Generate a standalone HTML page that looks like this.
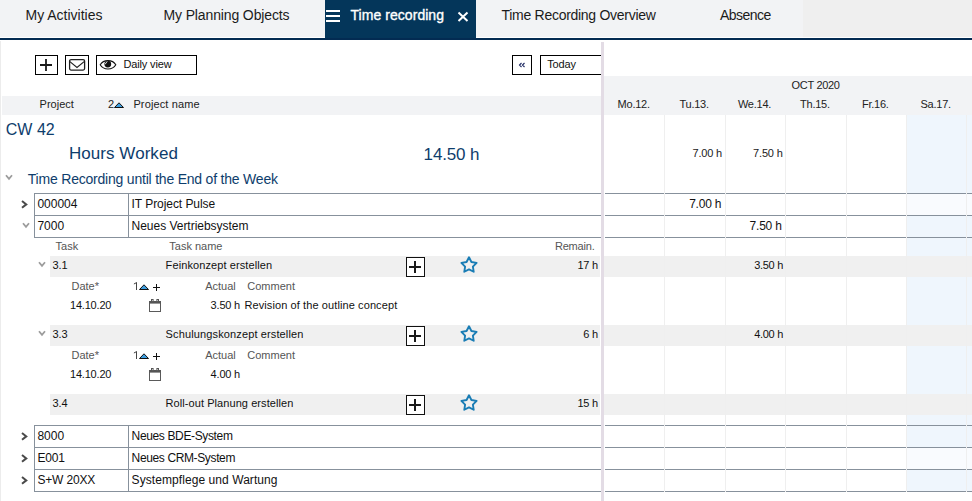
<!DOCTYPE html>
<html><head><meta charset="utf-8"><style>
html,body{margin:0;padding:0;width:972px;height:501px;overflow:hidden;background:#fff;position:relative}
body>div,body>svg{position:absolute}
.t{font-family:"Liberation Sans",sans-serif;line-height:1;white-space:nowrap}
</style></head><body>
<div style="left:0px;top:0px;width:803px;height:37px;background:#f2f3f5"></div>
<div style="left:803px;top:0px;width:169px;height:37px;background:#efefef"></div>
<div style="left:0px;top:37px;width:972px;height:1px;background:#fff"></div>
<div style="left:325px;top:0px;width:151px;height:38px;background:#04365a"></div>
<div style="left:0px;top:38px;width:972px;height:2px;background:#032b52"></div>
<div class="t" style="left:25.5px;top:8px;font-size:14px;color:#1b1b1b;">My Activities</div>
<div class="t" style="left:163.5px;top:8px;font-size:14px;color:#1b1b1b;letter-spacing:-0.13px">My Planning Objects</div>
<div class="t" style="left:350.5px;top:8px;font-size:14px;color:#fff;letter-spacing:0.05px;-webkit-text-stroke:0.35px #fff">Time recording</div>
<div class="t" style="left:501.5px;top:8px;font-size:14px;color:#1b1b1b;letter-spacing:-0.28px">Time Recording Overview</div>
<div class="t" style="left:720px;top:8px;font-size:14px;color:#1b1b1b;letter-spacing:-0.55px">Absence</div>
<div style="left:326px;top:10px;width:14px;height:2px;background:#fff"></div>
<div style="left:326px;top:15px;width:14px;height:2px;background:#fff"></div>
<div style="left:326px;top:20px;width:14px;height:2px;background:#fff"></div>
<svg style="position:absolute;left:457px;top:11px" width="12" height="12" viewBox="0 0 12 12"><path d="M1.5 1.6L10.5 9.9M10.5 1.6L1.5 9.9" stroke="#fff" stroke-width="2"/></svg>
<div style="left:0px;top:41px;width:1px;height:460px;background:#ececec"></div>
<div style="left:35px;top:55px;width:23px;height:20px;border:1px solid #000;box-sizing:border-box;background:#fff"></div>
<svg style="position:absolute;left:35px;top:55px" width="23" height="20" viewBox="0 0 23 20"><path d="M5 10H17M11 4V16" stroke="#1a1a1a" stroke-width="1.8"/></svg>
<div style="left:65px;top:55px;width:24px;height:20px;border:1px solid #000;box-sizing:border-box;background:#fff"></div>
<svg style="position:absolute;left:65px;top:55px" width="24" height="20" viewBox="0 0 24 20"><rect x="4.6" y="4.6" width="15" height="10.5" rx="1.5" fill="none" stroke="#222" stroke-width="1.3"/><path d="M4.9 6.6L12 12.4L19.1 6.6" fill="none" stroke="#222" stroke-width="1.2"/></svg>
<div style="left:96px;top:55px;width:101px;height:20px;border:1px solid #000;box-sizing:border-box;background:#fff"></div>
<svg style="position:absolute;left:99px;top:58px" width="18" height="13" viewBox="0 0 18 13"><path d="M1.2 6.8C4.5 1.2 13.5 1.2 16.8 6.8C13.5 12.4 4.5 12.4 1.2 6.8Z" fill="none" stroke="#111" stroke-width="1.1"/><circle cx="8.8" cy="6.1" r="3.4" fill="#111"/><path d="M6.4 6.2Q6.6 4.4 8.4 3.6" fill="none" stroke="#fff" stroke-width="0.9"/></svg>
<div class="t" style="left:123.5px;top:59px;font-size:11px;color:#111;letter-spacing:-0.15px">Daily view</div>
<div style="left:512px;top:55px;width:20px;height:20px;border:1px solid #000;box-sizing:border-box;background:#fff"></div>
<svg style="position:absolute;left:518px;top:62px" width="8" height="6" viewBox="0 0 8 6"><path d="M3.5 1L1.5 3L3.5 5M6.5 1L4.5 3L6.5 5" fill="none" stroke="#1a2560" stroke-width="1.1"/></svg>
<div style="left:540px;top:55px;width:62px;height:20px;border:1px solid #000;border-right:none;box-sizing:border-box;background:#fff"></div>
<div class="t" style="left:547.3px;top:59px;font-size:11px;color:#111;letter-spacing:-0.18px">Today</div>
<div style="left:604px;top:76px;width:368px;height:39px;background:#f2f3f5"></div>
<div style="left:2px;top:96px;width:599px;height:19px;background:#f2f3f5"></div>
<div class="t" style="left:39.6px;top:99px;font-size:11px;color:#222;">Project</div>
<div class="t" style="left:108px;top:99px;font-size:11px;color:#222;">2</div>
<svg style="position:absolute;left:114px;top:102px" width="10" height="6" viewBox="0 0 10 6"><path d="M0.5 5.5L5 0.8L9.5 5.5Z" fill="#3d9ee0" stroke="#111" stroke-width="1"/></svg>
<div class="t" style="left:133.4px;top:99px;font-size:11px;color:#222;letter-spacing:0.13px">Project name</div>
<div class="t" style="left:791.5px;top:80px;font-size:11px;color:#222;letter-spacing:-0.3px">OCT 2020</div>
<div class="t" style="left:593.70px;width:80px;text-align:center;top:99px;font-size:11px;color:#222;letter-spacing:-0.25px">Mo.12.</div>
<div class="t" style="left:654.10px;width:80px;text-align:center;top:99px;font-size:11px;color:#222;letter-spacing:-0.25px">Tu.13.</div>
<div class="t" style="left:714.50px;width:80px;text-align:center;top:99px;font-size:11px;color:#222;letter-spacing:-0.25px">We.14.</div>
<div class="t" style="left:774.90px;width:80px;text-align:center;top:99px;font-size:11px;color:#222;letter-spacing:-0.25px">Th.15.</div>
<div class="t" style="left:835.30px;width:80px;text-align:center;top:99px;font-size:11px;color:#222;letter-spacing:-0.25px">Fr.16.</div>
<div class="t" style="left:895.70px;width:80px;text-align:center;top:99px;font-size:11px;color:#222;letter-spacing:-0.25px">Sa.17.</div>
<div style="left:906.4px;top:115px;width:60.4px;height:377px;background:#eff6fd"></div>
<div style="left:966.8px;top:115px;width:6px;height:377px;background:#eff6fd"></div>
<div style="left:50px;top:256px;width:550px;height:21px;background:#f0f0f0"></div>
<div style="left:604px;top:256px;width:368px;height:21px;background:#f0f0f0"></div>
<div style="left:50px;top:325px;width:550px;height:21px;background:#f0f0f0"></div>
<div style="left:604px;top:325px;width:368px;height:21px;background:#f0f0f0"></div>
<div style="left:50px;top:394px;width:550px;height:21px;background:#f0f0f0"></div>
<div style="left:604px;top:394px;width:368px;height:21px;background:#f0f0f0"></div>
<div style="left:906.4px;top:194px;width:66px;height:21px;background:#f9fbfe"></div>
<div style="left:906.4px;top:448px;width:66px;height:21px;background:#f9fbfe"></div>
<div style="left:664.4px;top:115px;width:1px;height:377px;background:#efefef"></div>
<div style="left:724.8px;top:115px;width:1px;height:377px;background:#efefef"></div>
<div style="left:785.2px;top:115px;width:1px;height:377px;background:#efefef"></div>
<div style="left:845.6px;top:115px;width:1px;height:377px;background:#efefef"></div>
<div style="left:906.0px;top:115px;width:1px;height:377px;background:#efefef"></div>
<div style="left:966.4px;top:115px;width:1px;height:377px;background:#efefef"></div>
<div style="left:601px;top:42px;width:3px;height:459px;background:#e3dce5"></div>
<div class="t" style="left:5.8px;top:122px;font-size:16px;color:#0e3d6c;">CW 42</div>
<div class="t" style="left:69px;top:145px;font-size:17px;color:#0e3d6c;letter-spacing:0.05px">Hours Worked</div>
<div class="t" style="left:423.6px;top:146px;font-size:17px;color:#0e3d6c;letter-spacing:-0.15px">14.50 h</div>
<div class="t" style="left:692.5px;top:148px;font-size:11px;color:#222;letter-spacing:-0.18px">7.00 h</div>
<div class="t" style="left:753.1px;top:148px;font-size:11px;color:#222;letter-spacing:-0.18px">7.50 h</div>
<svg style="position:absolute;left:5.3px;top:174.2px" width="9" height="8" viewBox="0 0 9 8"><path d="M1 1.2L4 4.9L7 1.2" fill="none" stroke="#9c9c9c" stroke-width="1.75"/></svg>
<div class="t" style="left:27.8px;top:172px;font-size:14px;color:#0e3d6c;letter-spacing:-0.21px">Time Recording until the End of the Week</div>
<div style="left:34px;top:193px;width:567px;height:1px;background:#87919c"></div>
<div style="left:605.0px;top:193px;width:59.4px;height:1px;background:#87919c"></div>
<div style="left:665.4px;top:193px;width:59.4px;height:1px;background:#87919c"></div>
<div style="left:725.8px;top:193px;width:59.4px;height:1px;background:#87919c"></div>
<div style="left:786.2px;top:193px;width:59.4px;height:1px;background:#87919c"></div>
<div style="left:846.6px;top:193px;width:59.4px;height:1px;background:#87919c"></div>
<div style="left:907.0px;top:193px;width:59.4px;height:1px;background:#87919c"></div>
<div style="left:967.4px;top:193px;width:10px;height:1px;background:#87919c"></div>
<svg style="position:absolute;left:21px;top:200px" width="8" height="9" viewBox="0 0 8 9"><path d="M1 1L5.3 4.4L1 7.8" fill="none" stroke="#4a4a4a" stroke-width="2"/></svg>
<div class="t" style="left:37.4px;top:198px;font-size:12px;color:#111;">000004</div>
<div class="t" style="left:131.6px;top:198px;font-size:12px;color:#111;;letter-spacing:-0.06px">IT Project Pulse</div>
<div class="t" style="right:250.70000000000005px;top:198px;font-size:12px;color:#111;letter-spacing:-0.2px">7.00 h</div>
<div style="left:34px;top:215px;width:567px;height:1px;background:#87919c"></div>
<div style="left:605.0px;top:215px;width:59.4px;height:1px;background:#87919c"></div>
<div style="left:665.4px;top:215px;width:59.4px;height:1px;background:#87919c"></div>
<div style="left:725.8px;top:215px;width:59.4px;height:1px;background:#87919c"></div>
<div style="left:786.2px;top:215px;width:59.4px;height:1px;background:#87919c"></div>
<div style="left:846.6px;top:215px;width:59.4px;height:1px;background:#87919c"></div>
<div style="left:907.0px;top:215px;width:59.4px;height:1px;background:#87919c"></div>
<div style="left:967.4px;top:215px;width:10px;height:1px;background:#87919c"></div>
<svg style="position:absolute;left:21.6px;top:222.2px" width="9" height="8" viewBox="0 0 9 8"><path d="M1 1.2L4 4.9L7 1.2" fill="none" stroke="#9c9c9c" stroke-width="1.75"/></svg>
<div class="t" style="left:37.4px;top:220px;font-size:12px;color:#111;">7000</div>
<div class="t" style="left:131.6px;top:220px;font-size:12px;color:#111;;letter-spacing:-0.03px">Neues Vertriebsystem</div>
<div class="t" style="right:190.29999999999995px;top:220px;font-size:12px;color:#111;letter-spacing:-0.2px">7.50 h</div>
<div style="left:34px;top:237px;width:567px;height:1px;background:#87919c"></div>
<div style="left:605.0px;top:237px;width:59.4px;height:1px;background:#87919c"></div>
<div style="left:665.4px;top:237px;width:59.4px;height:1px;background:#87919c"></div>
<div style="left:725.8px;top:237px;width:59.4px;height:1px;background:#87919c"></div>
<div style="left:786.2px;top:237px;width:59.4px;height:1px;background:#87919c"></div>
<div style="left:846.6px;top:237px;width:59.4px;height:1px;background:#87919c"></div>
<div style="left:907.0px;top:237px;width:59.4px;height:1px;background:#87919c"></div>
<div style="left:967.4px;top:237px;width:10px;height:1px;background:#87919c"></div>
<div style="left:34px;top:193px;width:1px;height:45px;background:#87919c"></div>
<div style="left:128px;top:193px;width:1px;height:45px;background:#87919c"></div>
<div class="t" style="left:55.6px;top:241px;font-size:11px;color:#555;">Task</div>
<div class="t" style="left:169.3px;top:241px;font-size:11px;color:#555;">Task name</div>
<div class="t" style="right:377.5px;top:241px;font-size:11px;color:#555;letter-spacing:-0.2px">Remain.</div>
<svg style="position:absolute;left:37.5px;top:261px" width="9" height="8" viewBox="0 0 9 8"><path d="M1 1.2L4 4.9L7 1.2" fill="none" stroke="#9c9c9c" stroke-width="1.75"/></svg>
<div class="t" style="left:52.4px;top:260px;font-size:11px;color:#111;">3.1</div>
<div class="t" style="left:165.6px;top:260px;font-size:11px;color:#111;;letter-spacing:0.1px">Feinkonzept erstellen</div>
<div style="left:406px;top:257px;width:19px;height:20px;border:1px solid #111;box-sizing:border-box;background:#fff"></div>
<svg style="position:absolute;left:406px;top:257px" width="19" height="20" viewBox="0 0 19 20"><path d="M3 10H15M9 4V16" stroke="#1a1a1a" stroke-width="2"/></svg>
<svg style="position:absolute;left:459px;top:256px" width="20" height="18" viewBox="0 0 20 18"><path d="M10.00 1.30L12.41 5.98L17.61 6.83L13.90 10.57L14.70 15.77L10.00 13.40L5.30 15.77L6.10 10.57L2.39 6.83L7.59 5.98Z" fill="none" stroke="#1a7db5" stroke-width="1.9" stroke-linejoin="round"/></svg>
<div class="t" style="right:374px;top:260px;font-size:11px;color:#111;letter-spacing:-0.2px">17 h</div>
<div class="t" style="right:189px;top:260px;font-size:11px;color:#111;letter-spacing:-0.3px">3.50 h</div>
<div class="t" style="left:71.5px;top:281px;font-size:11px;color:#555;">Date*</div>
<svg style="position:absolute;left:133px;top:282px" width="6" height="9" viewBox="0 0 6 9"><path d="M3.5 0.3V8M3.4 0.7L0.9 2" fill="none" stroke="#444" stroke-width="1"/></svg>
<svg style="position:absolute;left:139px;top:284px" width="10" height="6" viewBox="0 0 10 6"><path d="M0.5 5.5L5 0.8L9.5 5.5Z" fill="#3d9ee0" stroke="#111" stroke-width="1"/></svg>
<svg style="position:absolute;left:153px;top:284px" width="8" height="8" viewBox="0 0 8 8"><path d="M0 3.5H7M3.5 0V7" stroke="#111" stroke-width="1"/></svg>
<div class="t" style="left:205.2px;top:281px;font-size:11px;color:#555;">Actual</div>
<div class="t" style="left:247.3px;top:281px;font-size:11px;color:#555;">Comment</div>
<div class="t" style="left:70px;top:300px;font-size:11px;color:#111;letter-spacing:-0.2px">14.10.20</div>
<svg style="position:absolute;left:149px;top:299px" width="13" height="14" viewBox="0 0 13 14"><rect x="0.5" y="2.5" width="11" height="10" fill="#fff" stroke="#5a5a5a" stroke-width="1"/><rect x="0.5" y="2" width="11" height="2.6" fill="#555"/><rect x="2.5" y="0.5" width="1.6" height="2.2" fill="#fff" stroke="#555" stroke-width="1"/><rect x="7.9" y="0.5" width="1.6" height="2.2" fill="#fff" stroke="#555" stroke-width="1"/></svg>
<div class="t" style="right:732px;top:300px;font-size:11px;color:#111;letter-spacing:-0.2px">3.50 h</div>
<div class="t" style="left:244.4px;top:300px;font-size:11px;color:#111;letter-spacing:0.1px">Revision of the outline concept</div>
<svg style="position:absolute;left:37.5px;top:330px" width="9" height="8" viewBox="0 0 9 8"><path d="M1 1.2L4 4.9L7 1.2" fill="none" stroke="#9c9c9c" stroke-width="1.75"/></svg>
<div class="t" style="left:52.4px;top:329px;font-size:11px;color:#111;">3.3</div>
<div class="t" style="left:165.6px;top:329px;font-size:11px;color:#111;;letter-spacing:0.13px">Schulungskonzept erstellen</div>
<div style="left:406px;top:326px;width:19px;height:20px;border:1px solid #111;box-sizing:border-box;background:#fff"></div>
<svg style="position:absolute;left:406px;top:326px" width="19" height="20" viewBox="0 0 19 20"><path d="M3 10H15M9 4V16" stroke="#1a1a1a" stroke-width="2"/></svg>
<svg style="position:absolute;left:459px;top:325px" width="20" height="18" viewBox="0 0 20 18"><path d="M10.00 1.30L12.41 5.98L17.61 6.83L13.90 10.57L14.70 15.77L10.00 13.40L5.30 15.77L6.10 10.57L2.39 6.83L7.59 5.98Z" fill="none" stroke="#1a7db5" stroke-width="1.9" stroke-linejoin="round"/></svg>
<div class="t" style="right:374px;top:329px;font-size:11px;color:#111;letter-spacing:-0.2px">6 h</div>
<div class="t" style="right:189px;top:329px;font-size:11px;color:#111;letter-spacing:-0.3px">4.00 h</div>
<div class="t" style="left:71.5px;top:350px;font-size:11px;color:#555;">Date*</div>
<svg style="position:absolute;left:133px;top:351px" width="6" height="9" viewBox="0 0 6 9"><path d="M3.5 0.3V8M3.4 0.7L0.9 2" fill="none" stroke="#444" stroke-width="1"/></svg>
<svg style="position:absolute;left:139px;top:353px" width="10" height="6" viewBox="0 0 10 6"><path d="M0.5 5.5L5 0.8L9.5 5.5Z" fill="#3d9ee0" stroke="#111" stroke-width="1"/></svg>
<svg style="position:absolute;left:153px;top:353px" width="8" height="8" viewBox="0 0 8 8"><path d="M0 3.5H7M3.5 0V7" stroke="#111" stroke-width="1"/></svg>
<div class="t" style="left:205.2px;top:350px;font-size:11px;color:#555;">Actual</div>
<div class="t" style="left:247.3px;top:350px;font-size:11px;color:#555;">Comment</div>
<div class="t" style="left:70px;top:369px;font-size:11px;color:#111;letter-spacing:-0.2px">14.10.20</div>
<svg style="position:absolute;left:149px;top:368px" width="13" height="14" viewBox="0 0 13 14"><rect x="0.5" y="2.5" width="11" height="10" fill="#fff" stroke="#5a5a5a" stroke-width="1"/><rect x="0.5" y="2" width="11" height="2.6" fill="#555"/><rect x="2.5" y="0.5" width="1.6" height="2.2" fill="#fff" stroke="#555" stroke-width="1"/><rect x="7.9" y="0.5" width="1.6" height="2.2" fill="#fff" stroke="#555" stroke-width="1"/></svg>
<div class="t" style="right:732px;top:369px;font-size:11px;color:#111;letter-spacing:-0.2px">4.00 h</div>
<div class="t" style="left:52.4px;top:398px;font-size:11px;color:#111;">3.4</div>
<div class="t" style="left:165.6px;top:398px;font-size:11px;color:#111;;letter-spacing:0.07px">Roll-out Planung erstellen</div>
<div style="left:406px;top:395px;width:19px;height:20px;border:1px solid #111;box-sizing:border-box;background:#fff"></div>
<svg style="position:absolute;left:406px;top:395px" width="19" height="20" viewBox="0 0 19 20"><path d="M3 10H15M9 4V16" stroke="#1a1a1a" stroke-width="2"/></svg>
<svg style="position:absolute;left:459px;top:394px" width="20" height="18" viewBox="0 0 20 18"><path d="M10.00 1.30L12.41 5.98L17.61 6.83L13.90 10.57L14.70 15.77L10.00 13.40L5.30 15.77L6.10 10.57L2.39 6.83L7.59 5.98Z" fill="none" stroke="#1a7db5" stroke-width="1.9" stroke-linejoin="round"/></svg>
<div class="t" style="right:374px;top:398px;font-size:11px;color:#111;letter-spacing:-0.2px">15 h</div>
<div style="left:34px;top:425px;width:567px;height:1px;background:#87919c"></div>
<div style="left:605.0px;top:425px;width:59.4px;height:1px;background:#87919c"></div>
<div style="left:665.4px;top:425px;width:59.4px;height:1px;background:#87919c"></div>
<div style="left:725.8px;top:425px;width:59.4px;height:1px;background:#87919c"></div>
<div style="left:786.2px;top:425px;width:59.4px;height:1px;background:#87919c"></div>
<div style="left:846.6px;top:425px;width:59.4px;height:1px;background:#87919c"></div>
<div style="left:907.0px;top:425px;width:59.4px;height:1px;background:#87919c"></div>
<div style="left:967.4px;top:425px;width:10px;height:1px;background:#87919c"></div>
<svg style="position:absolute;left:21px;top:432px" width="8" height="9" viewBox="0 0 8 9"><path d="M1 1L5.3 4.4L1 7.8" fill="none" stroke="#4a4a4a" stroke-width="2"/></svg>
<div class="t" style="left:37.4px;top:430px;font-size:12px;color:#111;">8000</div>
<div class="t" style="left:131.6px;top:430px;font-size:12px;color:#111;;letter-spacing:-0.36px">Neues BDE-System</div>
<div style="left:34px;top:447px;width:567px;height:1px;background:#87919c"></div>
<div style="left:605.0px;top:447px;width:59.4px;height:1px;background:#87919c"></div>
<div style="left:665.4px;top:447px;width:59.4px;height:1px;background:#87919c"></div>
<div style="left:725.8px;top:447px;width:59.4px;height:1px;background:#87919c"></div>
<div style="left:786.2px;top:447px;width:59.4px;height:1px;background:#87919c"></div>
<div style="left:846.6px;top:447px;width:59.4px;height:1px;background:#87919c"></div>
<div style="left:907.0px;top:447px;width:59.4px;height:1px;background:#87919c"></div>
<div style="left:967.4px;top:447px;width:10px;height:1px;background:#87919c"></div>
<svg style="position:absolute;left:21px;top:454px" width="8" height="9" viewBox="0 0 8 9"><path d="M1 1L5.3 4.4L1 7.8" fill="none" stroke="#4a4a4a" stroke-width="2"/></svg>
<div class="t" style="left:37.4px;top:452px;font-size:12px;color:#111;;letter-spacing:-0.2px">E001</div>
<div class="t" style="left:131.6px;top:452px;font-size:12px;color:#111;;letter-spacing:-0.37px">Neues CRM-System</div>
<div style="left:34px;top:469px;width:567px;height:1px;background:#87919c"></div>
<div style="left:605.0px;top:469px;width:59.4px;height:1px;background:#87919c"></div>
<div style="left:665.4px;top:469px;width:59.4px;height:1px;background:#87919c"></div>
<div style="left:725.8px;top:469px;width:59.4px;height:1px;background:#87919c"></div>
<div style="left:786.2px;top:469px;width:59.4px;height:1px;background:#87919c"></div>
<div style="left:846.6px;top:469px;width:59.4px;height:1px;background:#87919c"></div>
<div style="left:907.0px;top:469px;width:59.4px;height:1px;background:#87919c"></div>
<div style="left:967.4px;top:469px;width:10px;height:1px;background:#87919c"></div>
<svg style="position:absolute;left:21px;top:476px" width="8" height="9" viewBox="0 0 8 9"><path d="M1 1L5.3 4.4L1 7.8" fill="none" stroke="#4a4a4a" stroke-width="2"/></svg>
<div class="t" style="left:37.4px;top:474px;font-size:12px;color:#111;;letter-spacing:-0.17px">S+W 20XX</div>
<div class="t" style="left:131.6px;top:474px;font-size:12px;color:#111;;letter-spacing:0.07px">Systempflege und Wartung</div>
<div style="left:34px;top:491px;width:567px;height:1px;background:#87919c"></div>
<div style="left:605.0px;top:491px;width:59.4px;height:1px;background:#87919c"></div>
<div style="left:665.4px;top:491px;width:59.4px;height:1px;background:#87919c"></div>
<div style="left:725.8px;top:491px;width:59.4px;height:1px;background:#87919c"></div>
<div style="left:786.2px;top:491px;width:59.4px;height:1px;background:#87919c"></div>
<div style="left:846.6px;top:491px;width:59.4px;height:1px;background:#87919c"></div>
<div style="left:907.0px;top:491px;width:59.4px;height:1px;background:#87919c"></div>
<div style="left:967.4px;top:491px;width:10px;height:1px;background:#87919c"></div>
<div style="left:34px;top:425px;width:1px;height:67px;background:#87919c"></div>
<div style="left:128px;top:425px;width:1px;height:67px;background:#87919c"></div>
</body></html>
